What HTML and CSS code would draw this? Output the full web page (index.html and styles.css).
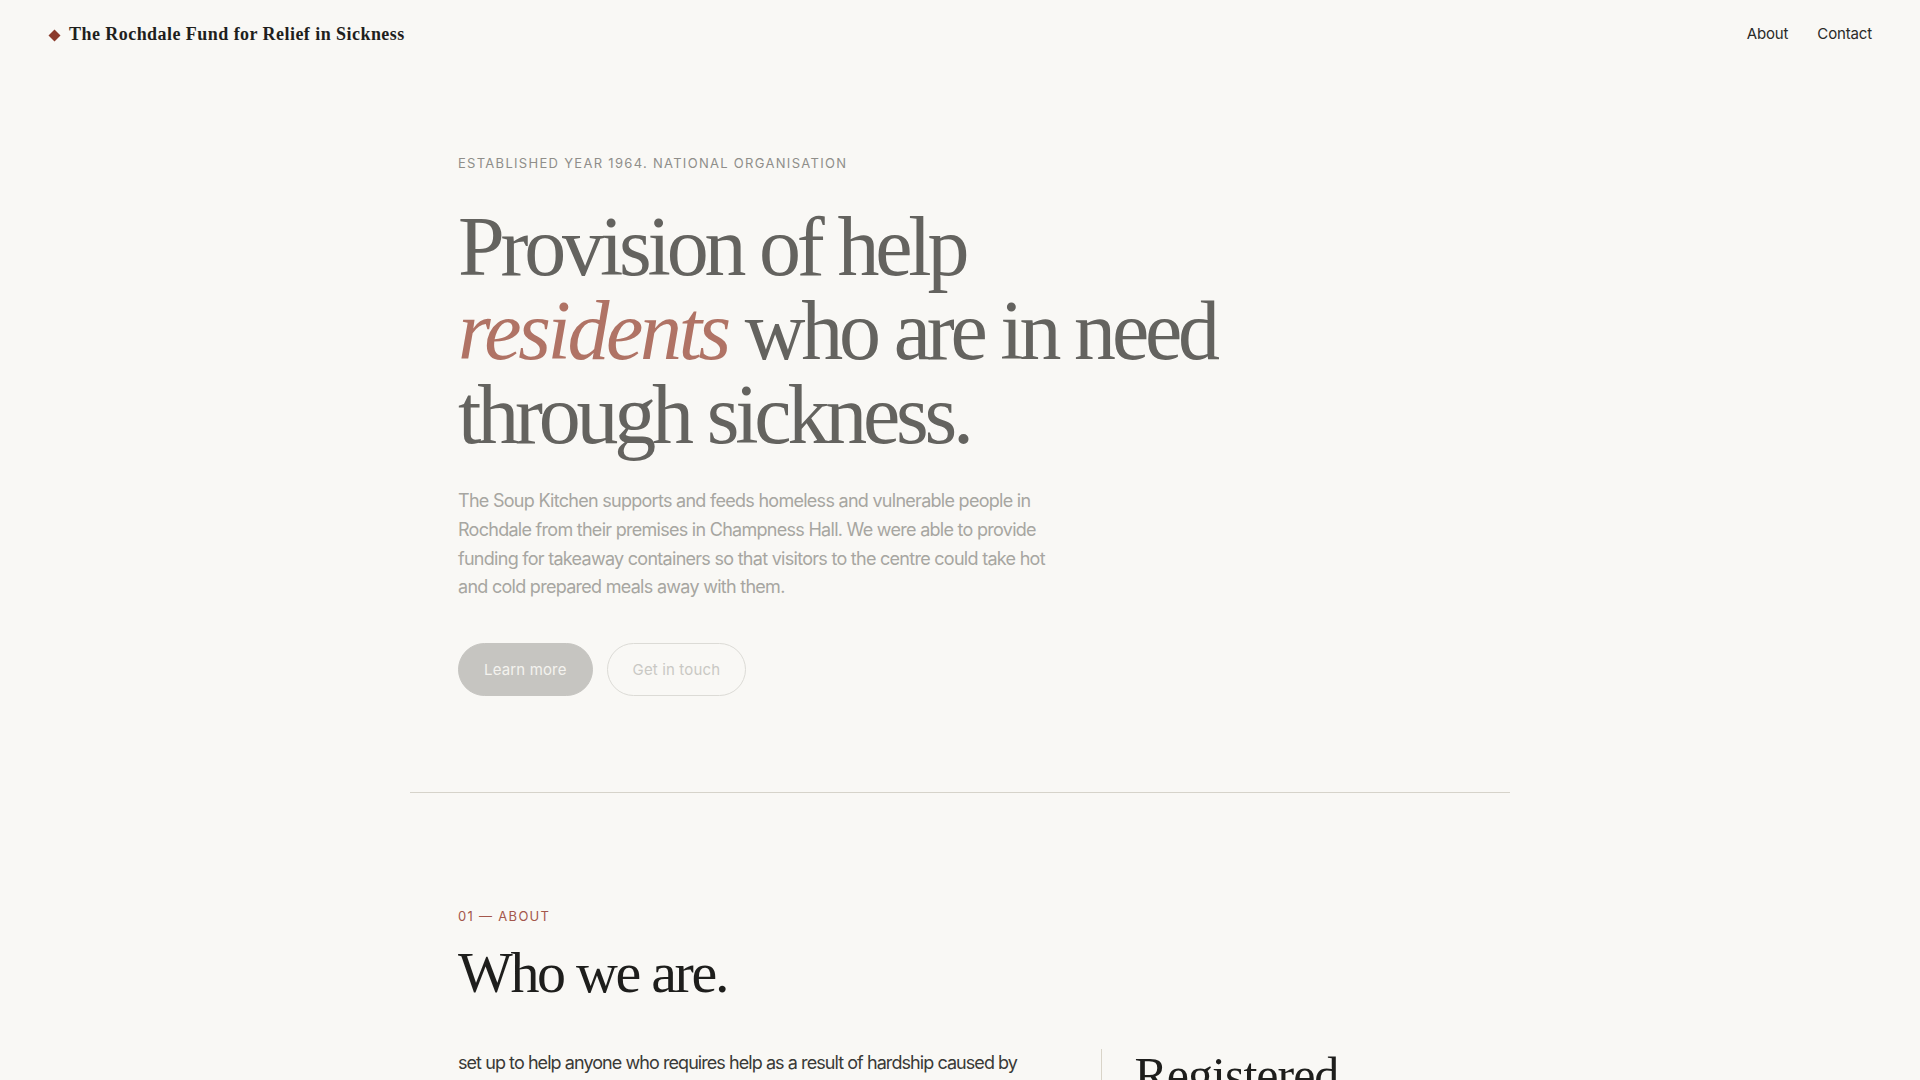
FILE: index.html
```html
<!DOCTYPE html>
<html lang="en">
<head>
<meta charset="utf-8">
<title>The Rochdale Fund for Relief in Sickness</title>
<link rel="stylesheet" href="styles.css">
</head>
<body>
<header class="nav">
  <a class="brand" href="#">
    <svg class="brand-mark" width="13" height="13" viewBox="0 0 13 13" aria-hidden="true"><polygon points="6.5,0.5 12.5,6.5 6.5,12.5 0.5,6.5" fill="#8b3a2b"/></svg>
    <span class="brand-name">The Rochdale Fund for Relief in Sickness</span>
  </a>
  <nav class="nav-links">
    <a href="#about">About</a>
    <a href="#contact">Contact</a>
  </nav>
</header>

<main class="container">
  <section class="hero">
    <p class="eyebrow">Established year 1964. National organisation</p>
    <h1 class="hero-title">Provision of help<br><em>residents</em> who are in need<br>through sickness.</h1>
    <p class="hero-text">The Soup Kitchen supports and feeds homeless and vulnerable people in Rochdale from their premises in Champness Hall. We were able to provide funding for takeaway containers so that visitors to the centre could take hot and cold prepared meals away with them.</p>
    <div class="actions">
      <a class="btn btn-solid" href="#about">Learn more</a>
      <a class="btn btn-outline" href="#contact">Get in touch</a>
    </div>
  </section>

  <hr class="rule">

  <section class="about" id="about">
    <p class="section-label">01 — About</p>
    <h2 class="section-title">Who we are.</h2>
    <div class="about-grid">
      <p class="about-text">set up to help anyone who requires help as a result of hardship caused by sickness, residing within the boundaries of the Metropolitan Borough of Rochdale.</p>
      <aside class="about-side">
        <h3 class="side-title">Registered</h3>
      </aside>
    </div>
  </section>
</main>
</body>
</html>
```

FILE: styles.css
```css
* { box-sizing: border-box; }

html, body {
  margin: 0;
  padding: 0;
  background: #f9f8f5;
}

body {
  font-family: "Inter", "Liberation Sans", sans-serif;
  color: #2a2a28;
}

a { text-decoration: none; color: inherit; }

.nav {
  display: flex;
  justify-content: space-between;
  align-items: center;
  padding: 23px 48px 23px 48px;
}

.brand {
  display: flex;
  align-items: center;
  gap: 8px;
}

.brand-mark { display: block; margin-top: 2px; }

.brand-name {
  font-family: "Liberation Serif", serif;
  font-weight: 700;
  font-size: 18px;
  line-height: 22px;
  color: #1f1f1d;
  letter-spacing: 0.025em;
}

.nav-links {
  display: flex;
  gap: 29px;
  font-size: 15px;
  line-height: 22px;
  color: #2a2a28;
  letter-spacing: -0.01em;
}

.container {
  max-width: 1100px;
  margin: 0 auto;
}

.hero {
  padding: 85px 48px 96px 48px;
}

.eyebrow {
  margin: 0;
  font-size: 13px;
  line-height: 20px;
  letter-spacing: 0.1em;
  text-transform: uppercase;
  color: #8f8e8a;
}

.hero-title {
  margin: 32px 0 0 0;
  font-family: "Liberation Serif", serif;
  font-weight: 400;
  font-size: 84px;
  line-height: 84px;
  letter-spacing: -0.05em;
  color: #64635f;
}

.hero-title em {
  font-style: italic;
  color: #b07365;
  letter-spacing: -0.04em;
}

.hero-text {
  margin: 30px 0 0 0;
  max-width: 600px;
  font-size: 18px;
  line-height: 28.8px;
  letter-spacing: -0.04em;
  color: #a7a6a1;
}

.actions {
  display: flex;
  gap: 14px;
  margin-top: 41px;
}

.btn {
  display: inline-flex;
  align-items: center;
  justify-content: center;
  height: 53px;
  padding: 0 25px;
  border-radius: 999px;
  font-size: 15px;
  letter-spacing: 0.01em;
}

.btn-solid {
  background: #c6c5c1;
  color: #f4f3ef;
  border: 1px solid #c6c5c1;
}

.btn-outline {
  background: transparent;
  color: #c9c8c4;
  border: 1px solid #dcdbd6;
}

.rule {
  margin: 0;
  border: 0;
  border-top: 1px solid #d6d3ca;
}

.about {
  padding: 113px 48px 80px 48px;
}

.section-label {
  margin: 0;
  font-size: 13px;
  line-height: 20px;
  letter-spacing: 0.1em;
  text-transform: uppercase;
  color: #a4574b;
}

.section-title {
  margin: 15px 0 0 0;
  font-family: "Liberation Serif", serif;
  font-weight: 400;
  font-size: 58px;
  line-height: 64px;
  letter-spacing: -0.04em;
  color: #1e1e1c;
}

.about-grid {
  display: grid;
  grid-template-columns: 5fr 3fr;
  gap: 40px;
  margin-top: 44px;
}

.about-text {
  margin: 0;
  font-size: 18px;
  line-height: 28.8px;
  letter-spacing: -0.052em;
  color: #3a3a37;
}

.about-side {
  border-left: 1px solid #d9d4c8;
  padding-left: 33px;
}

.side-title {
  margin: 0;
  font-family: "Liberation Serif", serif;
  font-weight: 400;
  font-size: 50px;
  line-height: 53px;
  letter-spacing: -0.02em;
  color: #1e1e1c;
}
```
